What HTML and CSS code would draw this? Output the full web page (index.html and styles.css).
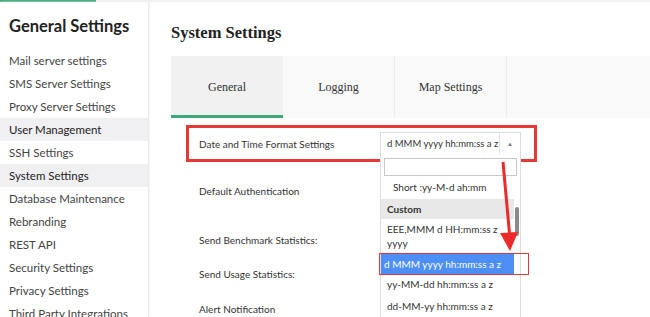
FILE: index.html
```html
<!DOCTYPE html>
<html lang="en">
<head>
  <meta charset="UTF-8" />
  <meta name="viewport" content="width=device-width, initial-scale=1.0"/>
  <title>System Settings</title>
  <link rel="stylesheet" href="styles.css">
</head>
<body>
  <div class="top-strip"><div class="top-active"></div></div>

  <div class="layout">
    <aside class="sidebar">
      <h2 class="side-title">General Settings</h2>
      <ul class="side-menu">
        <li>Mail server settings</li>
        <li>SMS Server Settings</li>
        <li>Proxy Server Settings</li>
        <li class="hl">User Management</li>
        <li>SSH Settings</li>
        <li class="hl">System Settings</li>
        <li>Database Maintenance</li>
        <li>Rebranding</li>
        <li>REST API</li>
        <li>Security Settings</li>
        <li>Privacy Settings</li>
        <li>Third Party Integrations</li>
      </ul>
    </aside>

    <main class="main">
      <h1 class="page-title">System Settings</h1>

      <div class="tabs">
        <div class="tab active">General</div>
        <div class="tab">Logging</div>
        <div class="tab">Map Settings</div>
      </div>

      <div class="form">
        <div class="row row-marked">
          <span class="label label-wide">Date and Time Format Settings</span>
          <div class="select-wrap">
            <div class="select">
              <span class="select-value">d MMM yyyy hh:mm:ss a z</span>
              <span class="select-arrow">&#9650;</span>
            </div>
            <div class="dropdown">
              <div class="search"></div>
              <ul class="options">
                <li class="opt opt-sub">Short :yy-M-d ah:mm</li>
                <li class="group">Custom</li>
                <li class="opt">EEE,MMM d HH:mm:ss z yyyy</li>
                <li class="opt selected">d MMM yyyy hh:mm:ss a z</li>
                <li class="opt">yy-MM-dd hh:mm:ss a z</li>
                <li class="opt">dd-MM-yy hh:mm:ss a z</li>
              </ul>
              <div class="scroll-thumb"></div>
            </div>
          </div>
        </div>
        <div class="row row-auth"><span class="label">Default Authentication</span></div>
        <div class="row row-bench"><span class="label">Send Benchmark Statistics:</span></div>
        <div class="row row-usage"><span class="label">Send Usage Statistics:</span></div>
        <div class="row row-alert"><span class="label">Alert Notification</span></div>
      </div>

      <svg class="arrow" width="30" height="100" viewBox="0 0 30 100">
        <line x1="9" y1="3" x2="16" y2="80" stroke="#ec2a2a" stroke-width="3"/>
        <polygon points="6,74 24,73 16,92" fill="#ec2a2a"/>
      </svg>
    </main>
  </div>
</body>
</html>
```

FILE: styles.css
```css
html, body {
  margin: 0;
  height: 100%;
  overflow: hidden;
}

body {
  font-family: "Lato", "Open Sans", sans-serif;
  color: #333;
  background-color: #fff;
}

.top-strip {
  height: 2px;
  background-color: #f1f1f1;
}

.top-active {
  width: 96px;
  height: 2px;
  background-color: #3ba877;
}

.layout {
  display: flex;
  height: 315px;
}

.sidebar {
  width: 148px;
  border-right: 1px solid #ececec;
  box-shadow: 1px 0 2px #f3f3f3;
  flex-shrink: 0;
}

.side-title {
  margin: 15px 0 0 9px;
  font-size: 16.5px;
  font-weight: bold;
  color: #222;
  line-height: 18px;
}

.side-menu {
  list-style: none;
  margin: 14px 0 0;
  padding: 0;
}

.side-menu li {
  height: 23px;
  line-height: 23px;
  padding-left: 9px;
  font-size: 11.5px;
  color: #444;
  white-space: nowrap;
}

.side-menu li.hl {
  background-color: #f0f0f2;
  color: #222;
}

.main {
  position: relative;
  flex: 1;
  padding-left: 22px;
}

.page-title {
  margin: 21px 0 0;
  font-family: "Liberation Serif", serif;
  font-size: 16.5px;
  font-weight: bold;
  color: #222;
  line-height: 20px;
}

.tabs {
  display: flex;
  margin-top: 13px;
  height: 62px;
  background-color: #f9f9f9;
}

.tab {
  width: 111px;
  border-right: 1px solid #ececec;
  display: flex;
  align-items: center;
  justify-content: center;
  font-family: "Liberation Serif", serif;
  font-size: 12px;
  color: #333;
}

.tab.active {
  background-color: #f1f1f1;
  border-right: none;
  width: 112px;
  box-shadow: inset 0 -3px 0 #3ba877;
}

.form {
  margin-left: 15px;
  margin-top: 7px;
}

.row {
  display: flex;
  align-items: center;
  height: 20px;
  padding-left: 13px;
}

.row-marked {
  height: 31px;
  width: 335px;
  padding-left: 10px;
  border: 3px solid #e53935;
}

.label {
  font-size: 10px;
  color: #333;
}

.label-wide {
  width: 181px;
  flex-shrink: 0;
}

.row-auth { margin-top: 19px; }
.row-bench { margin-top: 29px; }
.row-usage { margin-top: 14px; }
.row-alert { margin-top: 15px; }

.select-wrap {
  position: relative;
}

.select {
  display: flex;
  width: 139px;
  height: 21px;
  border: 1px solid #ddd;
  background-color: #fff;
  font-size: 9.5px;
  color: #333;
}

.select-value {
  flex: 1;
  padding-left: 6px;
  line-height: 21px;
  white-space: nowrap;
  overflow: hidden;
}

.select-arrow {
  width: 20px;
  border-left: 1px solid #e3e3e3;
  text-align: center;
  line-height: 21px;
  font-size: 6px;
  color: #777;
}

.dropdown {
  position: absolute;
  top: 22px;
  left: 0;
  width: 139px;
  height: 170px;
  border: 1px solid #ddd;
  border-top: none;
  background-color: #fff;
  z-index: 2;
}

.search {
  margin: 4px 3px 0 3px;
  height: 16px;
  border: 1px solid #c8c8c8;
}

.options {
  list-style: none;
  margin: 0;
  padding: 0;
  width: 133px;
  font-size: 10px;
  color: #333;
}

.opt {
  padding: 3px 6px;
  line-height: 14px;
}

.opt-sub {
  padding-left: 12px;
  padding-top: 4px;
}

.group {
  margin-top: 2px;
  padding: 3px 6px;
  line-height: 14px;
  font-weight: bold;
  background-color: #e8e8e8;
}

.opt.selected {
  position: relative;
  margin-top: 1px;
  padding-left: 3px;
  background-color: #4d8ff6;
  color: #fff;
}

.opt.selected::after {
  content: "";
  position: absolute;
  left: -2px;
  top: -1px;
  right: -15px;
  bottom: -1px;
  border: 1px solid #d83a3f;
}

.opt:last-child {
  padding-top: 5px;
}

.scroll-thumb {
  position: absolute;
  left: 134px;
  top: 53px;
  width: 4px;
  height: 29px;
  border-radius: 2px;
  background-color: #8a8a8a;
}

.arrow {
  position: absolute;
  left: 345px;
  top: 157px;
  z-index: 3;
}
```
